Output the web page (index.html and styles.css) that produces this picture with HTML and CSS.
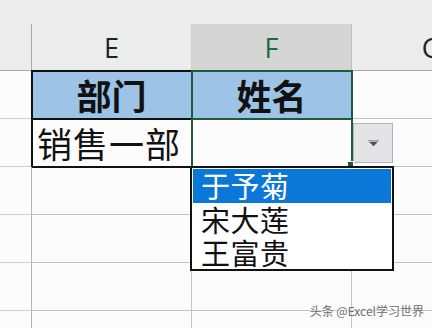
FILE: index.html
```html
<!DOCTYPE html>
<html lang="zh-CN">
<head>
    <meta charset="UTF-8">
    <title>数据验证下拉列表</title>
    <link rel="stylesheet" href="styles.css">
</head>
<body>
    <div class="sheet">
        <div class="topbar"></div>

        <div class="colheads">
            <div class="corner"></div>
            <div class="colhead">E</div>
            <div class="colhead active">F</div>
            <div class="colhead">G</div>
        </div>

        <div class="rows">
            <div class="row">
                <div class="rowhead"></div>
                <div class="cell title boxed">部门</div>
                <div class="cell title boxed picked">姓名</div>
                <div class="cell"></div>
            </div>
            <div class="row">
                <div class="rowhead"></div>
                <div class="cell text boxed">销售一部</div>
                <div class="cell boxed picked"></div>
                <div class="cell"></div>
            </div>
            <div class="row">
                <div class="rowhead"></div>
                <div class="cell"></div>
                <div class="cell"></div>
                <div class="cell"></div>
            </div>
            <div class="row">
                <div class="rowhead"></div>
                <div class="cell"></div>
                <div class="cell"></div>
                <div class="cell"></div>
            </div>
            <div class="row">
                <div class="rowhead"></div>
                <div class="cell"></div>
                <div class="cell"></div>
                <div class="cell"></div>
            </div>
            <div class="row">
                <div class="rowhead"></div>
                <div class="cell"></div>
                <div class="cell"></div>
                <div class="cell"></div>
            </div>
        </div>

        <!-- data validation dropdown -->
        <div class="drop-button">
            <svg width="11" height="7" viewBox="0 0 11 7">
                <rect x="0" y="0" width="11" height="1.2" fill="#a0a0a0"/>
                <path d="M1 1.8 L10 1.8 L5.5 6.2 Z" fill="#505050"/>
            </svg>
        </div>
        <div class="fill-handle"></div>
        <ul class="drop-list">
            <li class="current">于予菊</li>
            <li>宋大莲</li>
            <li>王富贵</li>
        </ul>

        <div class="watermark">头条 @Excel学习世界</div>
    </div>
</body>
</html>
```

FILE: styles.css
```css
* {
    margin: 0;
    padding: 0;
    box-sizing: border-box;
}

body {
    background: #fcfcfd;
    font-family: "Noto Sans CJK SC", "Noto Sans", sans-serif;
    color: #111;
    overflow: hidden;
}

.sheet {
    position: relative;
    width: 432px;
    height: 328px;
    overflow: hidden;
}

.topbar {
    height: 24px;
    background: #ececec;
}

.colheads {
    display: flex;
    height: 47px;
    background: #ececec;
    border-bottom: 1px solid #a8a8a8;
}

.corner {
    width: 32px;
    flex: none;
    border-right: 1px solid #a8a8a8;
}

.colhead {
    width: 160px;
    flex: none;
    display: flex;
    align-items: center;
    justify-content: center;
    font-family: "Open Sans", "Liberation Sans", sans-serif;
    font-size: 27px;
    color: #222;
    border-right: 1px solid #cfcfcf;
}

.colhead.active {
    background: #d5d5d5;
    color: #1d6b3e;
    border-right-color: #bdbdbd;
}

.row {
    display: flex;
    height: 48px;
}

.rowhead {
    width: 32px;
    flex: none;
    border-right: 1px solid #b4b4b4;
    border-bottom: 1px solid #cfcfcf;
}

.cell {
    width: 160px;
    flex: none;
    display: flex;
    align-items: center;
    border-right: 1px solid #c4c4c4;
    border-bottom: 1px solid #c4c4c4;
}

.cell.boxed {
    outline: 2px solid #111;
    outline-offset: -1px;
    border-color: transparent;
}

.cell.picked {
    outline-color: #1e5b39;
}

.cell.title {
    background: #9dc3e6;
    justify-content: center;
    font-size: 35px;
    font-weight: 700;
}

.cell.text {
    padding-left: 5px;
    font-size: 35px;
    letter-spacing: 1px;
}

.drop-button {
    position: absolute;
    left: 353px;
    top: 123px;
    width: 40px;
    height: 40px;
    background: #e4e4e6;
    border: 1px solid #b4b4b4;
    display: flex;
    align-items: center;
    justify-content: center;
}

.fill-handle {
    position: absolute;
    left: 347px;
    top: 161px;
    width: 7px;
    height: 6px;
    background: #1e5b39;
    border: 1px solid #fff;
}

.drop-list {
    position: absolute;
    left: 190px;
    top: 166px;
    width: 204px;
    height: 105px;
    list-style: none;
    background: #fff;
    border: 2px solid #111;
    padding: 1px;
}

.drop-list li {
    height: 33.5px;
    line-height: 33px;
    padding-left: 8px;
    font-size: 29px;
    letter-spacing: 0.5px;
}

.drop-list li.current {
    background: #0b77d8;
    color: #fff;
}

.watermark {
    position: absolute;
    right: 8px;
    bottom: 9px;
    font-size: 12px;
    color: #6c6c6c;
    text-shadow: 0 0 2px #fff, 0 0 2px #fff;
}
```
